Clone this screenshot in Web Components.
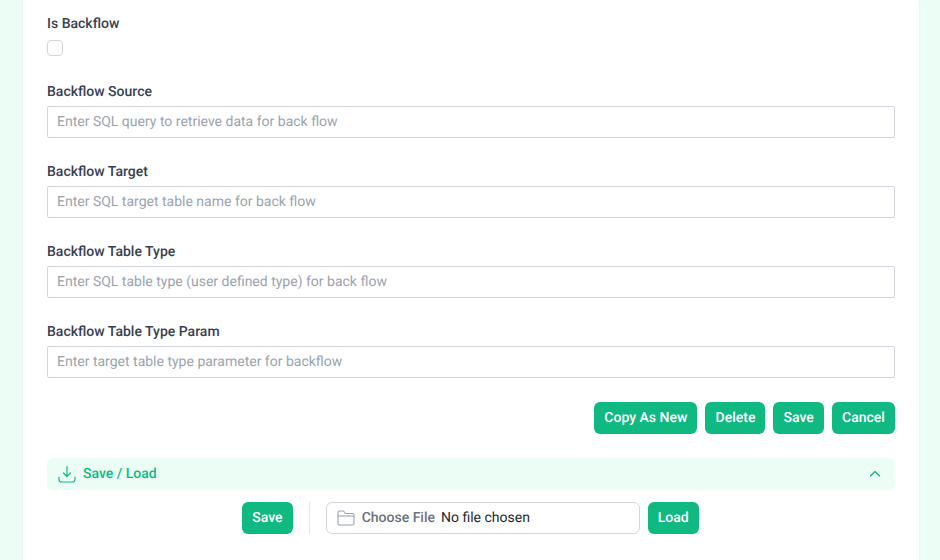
<!DOCTYPE html>
<html>
<head>
<meta charset="utf-8">
<title>Backflow settings</title>
<style>
    html, body { margin: 0; height: 560px; overflow: hidden; background: #ecfdf5; }
    body { font-family: Roboto, "Liberation Sans", sans-serif; text-rendering: geometricPrecision; }
</style>
</head>
<body>
<flow-card>
    <check-field label="Is Backflow"></check-field>
    <text-field label="Backflow Source" placeholder="Enter SQL query to retrieve data for back flow"></text-field>
    <text-field label="Backflow Target" placeholder="Enter SQL target table name for back flow"></text-field>
    <text-field label="Backflow Table Type" placeholder="Enter SQL table type (user defined type) for back flow"></text-field>
    <text-field label="Backflow Table Type Param" placeholder="Enter target table type parameter for backflow"></text-field>
    <action-bar>
        <green-button>Copy As New</green-button>
        <green-button>Delete</green-button>
        <green-button>Save</green-button>
        <green-button>Cancel</green-button>
    </action-bar>
    <save-load></save-load>
</flow-card>

<script>
class FlowCard extends HTMLElement {
    constructor() {
        super();
        this.attachShadow({mode: 'open'});
    }

    connectedCallback() {
        this.shadowRoot.innerHTML = `
        <style>
            :host {
                display: block;
                width: 896px;
                height: 560px;
                margin-left: 23px;
                box-sizing: border-box;
                padding: 13px 24px 0;
                background: #fff;
                box-shadow: 0 1px 3px rgba(0, 0, 0, 0.06);
            }
        </style>
        <slot></slot>
        `;
    }
}

class CheckField extends HTMLElement {
    constructor() {
        super();
        this.attachShadow({mode: 'open'});
    }

    connectedCallback() {
        this.shadowRoot.innerHTML = `
        <style>
            :host { display: block; height: 68px; }
            label {
                display: block;
                font-size: 14px;
                line-height: 20px;
                font-weight: 500;
                color: #374151;
                padding-top: 1px;
                margin-bottom: 6px;
            }
            .box {
                display: block;
                width: 16px;
                height: 16px;
                box-sizing: border-box;
                border: 1px solid #d1d5db;
                border-radius: 4px;
                background: #fff;
            }
        </style>
        <label>${this.getAttribute('label')}</label>
        <span class="box"></span>
        `;
    }
}

class TextField extends HTMLElement {
    constructor() {
        super();
        this.attachShadow({mode: 'open'});
    }

    connectedCallback() {
        this.shadowRoot.innerHTML = `
        <style>
            :host { display: block; height: 80px; }
            label {
                display: block;
                font-size: 14px;
                line-height: 20px;
                font-weight: 500;
                color: #374151;
                padding-top: 1px;
                margin-bottom: 4px;
            }
            input {
                display: block;
                width: 100%;
                height: 32px;
                box-sizing: border-box;
                padding: 0 9px;
                border: 1px solid #d1d5db;
                border-radius: 2px;
                background: #fff;
                font-family: inherit;
                font-size: 14px;
                text-rendering: inherit;
                outline: none;
            }
            input::placeholder { color: #9ca3af; opacity: 1; }
        </style>
        <label>${this.getAttribute('label')}</label>
        <input type="text" placeholder="${this.getAttribute('placeholder')}">
        `;
    }
}

class ActionBar extends HTMLElement {
    constructor() {
        super();
        this.attachShadow({mode: 'open'});
    }

    connectedCallback() {
        this.shadowRoot.innerHTML = `
        <style>
            :host {
                display: flex;
                justify-content: flex-end;
                gap: 8px;
                margin-top: 1px;
            }
        </style>
        <slot></slot>
        `;
    }
}

class GreenButton extends HTMLElement {
    constructor() {
        super();
        this.attachShadow({mode: 'open'});
    }

    connectedCallback() {
        this.shadowRoot.innerHTML = `
        <style>
            :host { display: block; }
            button {
                display: block;
                height: 32px;
                padding: 0 10.1px;
                border: 0;
                border-radius: 6px;
                background: #10b981;
                color: #fff;
                font-family: inherit;
                font-size: 14px;
                font-weight: 500;
                text-rendering: inherit;
                cursor: pointer;
            }
        </style>
        <button><slot></slot></button>
        `;
    }
}

class SaveLoad extends HTMLElement {
    constructor() {
        super();
        this.attachShadow({mode: 'open'});
    }

    connectedCallback() {
        this.shadowRoot.innerHTML = `
        <style>
            :host { display: block; margin-top: 24px; }
            .head {
                display: flex;
                align-items: center;
                height: 32px;
                box-sizing: border-box;
                padding: 0 12px 0 11px;
                gap: 7px;
                border-radius: 6px;
                background: #ecfdf5;
                color: #10b981;
                font-size: 14px;
                font-weight: 500;
            }
            .head span { flex: 1; }
            .body {
                display: flex;
                justify-content: center;
                align-items: center;
                gap: 8px;
                margin-top: 12px;
                padding-right: 1px;
            }
            .sep { width: 1px; height: 32px; background: #e5e7eb; margin: 0 8px; }
            .file {
                display: flex;
                align-items: center;
                width: 314px;
                height: 32px;
                box-sizing: border-box;
                padding: 0 10px;
                border: 1px solid #d1d5db;
                border-radius: 6px;
                font-size: 14px;
                color: #1f2937;
            }
            .file svg { margin-right: 7px; }
            .file b { font-weight: 500; color: #6b7280; margin-right: 6px; }
        </style>
        <div class="head">
            <svg width="18" height="18" viewBox="0 0 18 18" fill="none" stroke="currentColor" stroke-width="1.2" stroke-linecap="round" stroke-linejoin="round">
                <path d="M9 1.5V11.5M5.5 8L9 11.5L12.5 8"/>
                <path d="M1 12V14.5C1 16 2 17 3.5 17H14.5C16 17 17 16 17 14.5V12"/>
            </svg>
            <span>Save / Load</span>
            <svg width="16" height="16" viewBox="0 0 16 16" fill="none" stroke="currentColor" stroke-width="1.4" stroke-linecap="round" stroke-linejoin="round">
                <path d="M3.5 10L8 5.5L12.5 10"/>
            </svg>
        </div>
        <div class="body">
            <green-button>Save</green-button>
            <div class="sep"></div>
            <div class="file">
                <svg width="18" height="16" viewBox="0 0 18 16" fill="none" stroke="#9ca3af" stroke-width="1.1" stroke-linejoin="round">
                    <path d="M1 13.5V2.5C1 1.7 1.6 1 2.5 1H6.5L8.5 3.5H15.5C16.4 3.5 17 4.2 17 5V13.5C17 14.4 16.4 15 15.5 15H2.5C1.6 15 1 14.4 1 13.5Z"/>
                    <path d="M1 6H17"/>
                </svg>
                <b>Choose File</b>
                <span>No file chosen</span>
            </div>
            <green-button>Load</green-button>
        </div>
        `;
    }
}

customElements.define("flow-card", FlowCard);
customElements.define("check-field", CheckField);
customElements.define("text-field", TextField);
customElements.define("action-bar", ActionBar);
customElements.define("green-button", GreenButton);
customElements.define("save-load", SaveLoad);
</script>
</body>
</html>
